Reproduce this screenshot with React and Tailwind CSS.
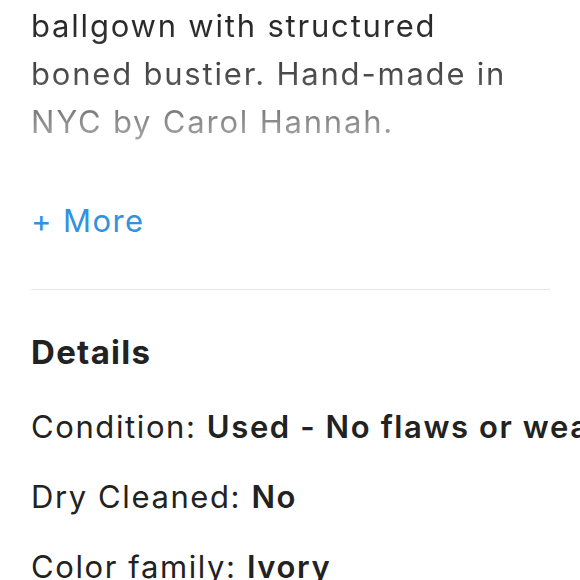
export default function App() {
  return (
    <div className="w-[580px] h-[580px] overflow-hidden bg-white px-[31px] font-['Inter',sans-serif] tracking-[1.6px]">
      {/* Description, faded */}
      <p className="text-[31px] leading-[48px] mt-[2px] tracking-[1.8px] bg-linear-to-b from-[#1c1c1c] via-[#4a4a4a] to-[#b0b0b0] bg-clip-text text-transparent">
        ballgown with structured
        <br />
        boned bustier. Hand-made in
        <br />
        NYC by Carol Hannah.
      </p>

      <button className="mt-[51px] text-[31px] leading-[48px] text-[#3391e0] tracking-[1.4px]">+ More</button>

      <div className="mt-[44px] border-t border-[#e6e6e6] w-[519px]" />

      {/* Details */}
      <h2 className="mt-[38px] text-[33px] leading-[48px] font-bold tracking-[1.3px] text-[#222]">Details</h2>

      <div className="mt-[27px] flex flex-col gap-[22px] text-[31px] leading-[48px] text-[#222] whitespace-nowrap">
        <p>
          Condition: <span className="font-semibold">Used - No flaws or wear</span>
        </p>
        <p>
          Dry Cleaned: <span className="font-semibold">No</span>
        </p>
        <p>
          Color family: <span className="font-semibold">Ivory</span>
        </p>
      </div>
    </div>
  );
}
